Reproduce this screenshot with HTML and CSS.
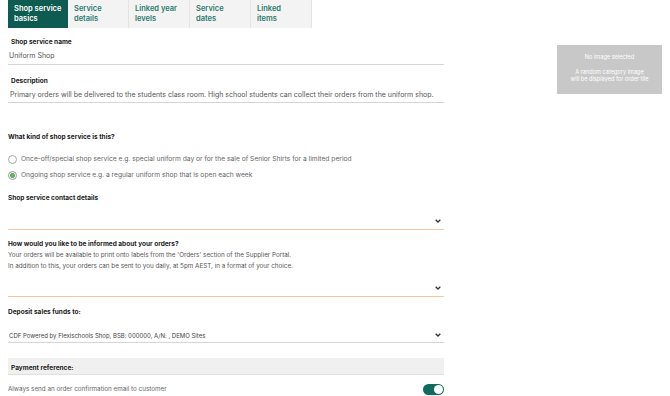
FILE: index.html
```html
<!DOCTYPE html>
<html>
	<head>
		<meta charset="utf-8">
		<title>Shop service basics</title>
		<link rel="stylesheet" href="styles.css">
	</head>
	<body>
		<ul class="tabs">
			<li class="tab tab-active">Shop service<br>basics</li>
			<li class="tab">Service<br>details</li>
			<li class="tab">Linked year<br>levels</li>
			<li class="tab">Service<br>dates</li>
			<li class="tab">Linked<br>items</li>
		</ul>

		<div class="page">
			<div class="form">
				<div class="field field-name">
					<div class="field-label">Shop service name</div>
					<div class="field-value">Uniform Shop</div>
				</div>
				<div class="field field-desc">
					<div class="field-label">Description</div>
					<div class="field-value">Primary orders will be delivered to the students class room. High school students can collect their orders from the uniform shop.</div>
				</div>

				<div class="question q-kind">What kind of shop service is this?</div>
				<label class="radio-row r-first">
					<span class="radio"></span>
					Once-off/special shop service e.g. special uniform day or for the sale of Senior Shirts for a limited period
				</label>
				<label class="radio-row">
					<span class="radio radio-on"></span>
					Ongoing shop service e.g. a regular uniform shop that is open each week
				</label>

				<div class="question q-contact">Shop service contact details</div>
				<div class="select select-warn">
					<span class="select-text"></span>
					<svg class="chevron" width="6" height="4" viewBox="0 0 6 4"><polyline points="0.7,0.7 3,3 5.3,0.7" fill="none" stroke="#333" stroke-width="1.3"/></svg>
				</div>

				<div class="question q-inform">How would you like to be informed about your orders?</div>
				<p class="help">Your orders will be available to print onto labels from the 'Orders' section of the Supplier Portal.<br>In addition to this, your orders can be sent to you daily, at 5pm AEST, in a format of your choice.</p>
				<div class="select select-warn select-format">
					<span class="select-text"></span>
					<svg class="chevron" width="6" height="4" viewBox="0 0 6 4"><polyline points="0.7,0.7 3,3 5.3,0.7" fill="none" stroke="#333" stroke-width="1.3"/></svg>
				</div>

				<div class="question q-deposit">Deposit sales funds to:</div>
				<div class="select select-bank">
					<span class="select-text">CDF Powered by Flexischools Shop, BSB: 000000, A/N: , DEMO Sites</span>
					<svg class="chevron" width="6" height="4" viewBox="0 0 6 4"><polyline points="0.7,0.7 3,3 5.3,0.7" fill="none" stroke="#333" stroke-width="1.3"/></svg>
				</div>

				<div class="pay-ref">Payment reference:</div>

				<div class="toggle-row">
					<span>Always send an order confirmation email to customer</span>
					<span class="toggle"><span class="toggle-knob"></span></span>
				</div>
			</div>

			<div class="aside">
				<div class="no-image">
					<div>No image selected</div>
					<div class="no-image-note">A random category image<br>will be displayed for order tile</div>
				</div>
			</div>
		</div>
	</body>
</html>
```

FILE: styles.css
```css
html,
body {
	margin: 0;
	background-color: #ffffff;
	font-family: Inter, "Open Sans", sans-serif;
	color: #222;
}

.tabs {
	display: flex;
	margin: 0 0 0 8px;
	padding: 0;
	list-style: none;
	height: 28px;
}

.tab {
	box-sizing: border-box;
	width: 61px;
	padding: 4px 6px 0 6px;
	font-size: 7.5px;
	line-height: 10px;
	font-weight: 600;
	color: #2b7a6c;
	background-color: #f3f3f3;
	border-right: 1px solid #e3e3e3;
}

.tab-active {
	width: 60px;
	color: #ffffff;
	background-color: #0d5b51;
	border-right: none;
}

.page {
	display: flex;
	align-items: flex-start;
	padding: 0 8px;
}

.form {
	width: 436px;
	flex: none;
}

.field-label {
	padding-left: 3px;
	font-size: 6.5px;
	line-height: 8px;
	font-weight: 700;
	color: #1a1a1a;
}

.field-value {
	font-size: 7px;
	line-height: 12px;
	color: #555;
	padding: 4px 1px 2px 1px;
	border-bottom: 1px solid #d5d5d5;
}

.field-name {
	margin-top: 10px;
}

.field-desc {
	margin-top: 12px;
}

.field-desc .field-value {
	padding-left: 2px;
	padding-bottom: 1px;
}

.question {
	font-size: 6.5px;
	line-height: 8px;
	font-weight: 700;
	color: #1a1a1a;
}

.q-kind {
	margin-top: 30px;
}

.q-contact {
	margin-top: 13px;
}

.q-inform {
	margin-top: 10px;
}

.q-deposit {
	margin-top: 11px;
}

.radio-row {
	display: flex;
	align-items: center;
	gap: 4px;
	margin-top: 4px;
	height: 12px;
	font-size: 6.7px;
	color: #666;
}

.r-first {
	margin-top: 12px;
}

.radio {
	box-sizing: border-box;
	width: 9px;
	height: 9px;
	border: 1px solid #aaa;
	border-radius: 50%;
	background: #fff;
}

.radio-on {
	background: radial-gradient(circle, #5cb85c 0 2.2px, #fff 2.6px);
	border-color: #999;
}

.select {
	display: flex;
	align-items: center;
	justify-content: space-between;
	height: 12px;
	padding: 0 3px 2px 1px;
	margin-top: 13px;
	border-bottom: 1px solid #d5d5d5;
	font-size: 6px;
	color: #444;
}

.select-warn {
	border-bottom-color: #f5c6a2;
}

.select-format {
	margin-top: 10px;
}

.select-bank {
	margin-top: 13px;
	padding-bottom: 1px;
}

.help {
	margin: 2px 0 0 0;
	font-size: 6.3px;
	line-height: 11px;
	color: #555;
}

.pay-ref {
	margin-top: 15px;
	height: 17px;
	box-sizing: border-box;
	padding: 6px 3px 0 3px;
	font-size: 6.5px;
	line-height: 8px;
	font-weight: 700;
	background-color: #f0f0f0;
	border-bottom: 1px solid #e0e0e0;
}

.toggle-row {
	display: flex;
	align-items: center;
	justify-content: space-between;
	height: 12px;
	margin-top: 8px;
	font-size: 6.3px;
	color: #666;
}

.toggle {
	position: relative;
	width: 21px;
	height: 11px;
	border-radius: 6px;
	background-color: #0e6b5e;
}

.toggle-knob {
	position: absolute;
	right: 1px;
	top: 1px;
	width: 9px;
	height: 9px;
	border-radius: 50%;
	background: #fff;
}

.aside {
	margin: 17px 0 0 113px;
}

.no-image {
	width: 105px;
	height: 49px;
	box-sizing: border-box;
	padding-top: 9px;
	background-color: #c8c8c8;
	color: #ffffff;
	font-size: 5.6px;
	line-height: 7px;
	text-align: center;
}

.no-image-note {
	margin-top: 8px;
}
```
